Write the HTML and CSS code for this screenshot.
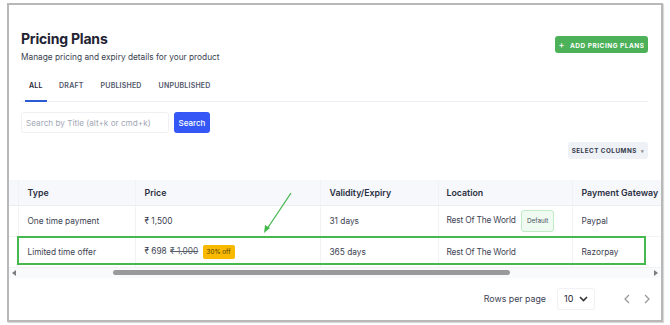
FILE: index.html
```html
<!DOCTYPE html>
<html lang="en">

<head>
    <meta charset="UTF-8">
    <meta name="viewport" content="width=device-width, initial-scale=1.0">
    <title>Pricing Plans</title>
    <link rel="stylesheet" href="styles.css">
</head>

<body>
    <div class="frame">
        <div class="content">
            <div class="page-head">
                <div class="titles">
                    <h1>Pricing Plans</h1>
                    <p class="subtitle">Manage pricing and expiry details for your product</p>
                </div>
                <button class="btn-add"><span class="plus">+</span> ADD PRICING PLANS</button>
            </div>

            <nav class="tabs">
                <a href="#" class="tab active">ALL</a>
                <a href="#" class="tab">DRAFT</a>
                <a href="#" class="tab">PUBLISHED</a>
                <a href="#" class="tab">UNPUBLISHED</a>
            </nav>

            <div class="search-row">
                <input type="text" class="search-input" placeholder="Search by Title (alt+k or cmd+k)">
                <button class="btn-search">Search</button>
            </div>

            <div class="columns-row">
                <button class="btn-columns">SELECT COLUMNS <span class="caret">&#9662;</span></button>
            </div>
        </div>

        <div class="table-wrap">
            <table class="plans">
                <thead>
                    <tr>
                        <th class="stub"></th>
                        <th class="c-type">Type</th>
                        <th class="c-price">Price</th>
                        <th class="c-valid">Validity/Expiry</th>
                        <th class="c-loc">Location</th>
                        <th class="c-pay">Payment Gateway</th>
                    </tr>
                </thead>
                <tbody>
                    <tr>
                        <td class="stub"></td>
                        <td>One time payment</td>
                        <td>&#8377; 1,500</td>
                        <td>31 days</td>
                        <td><span class="loc">Rest Of The World</span> <span class="badge-default">Default</span></td>
                        <td>Paypal</td>
                    </tr>
                    <tr>
                        <td class="stub"></td>
                        <td>Limited time offer</td>
                        <td>&#8377; 698 <s class="old-price">&#8377; 1,000</s> <span class="badge-off">30% off</span></td>
                        <td>365 days</td>
                        <td><span class="loc">Rest Of The World</span></td>
                        <td>Razorpay</td>
                    </tr>
                </tbody>
            </table>
        </div>

        <div class="scrollbar">
            <span class="arrow-left"></span>
            <div class="track"><div class="thumb"></div></div>
            <span class="arrow-right"></span>
        </div>

        <div class="pagination">
            <span class="rows-label">Rows per page</span>
            <div class="rows-select">
                <span>10</span>
                <svg width="9" height="6" viewBox="0 0 9 6"><path d="M1 1l3.5 3.5L8 1" fill="none" stroke="#333" stroke-width="1.6"/></svg>
            </div>
            <div class="pager">
                <svg width="6" height="10" viewBox="0 0 6 10"><path d="M5 1L1 5l4 4" fill="none" stroke="#999" stroke-width="1.3"/></svg>
                <svg width="6" height="10" viewBox="0 0 6 10"><path d="M1 1l4 4-4 4" fill="none" stroke="#999" stroke-width="1.3"/></svg>
            </div>
        </div>
    </div>

    <!-- annotation drawn over the screenshot -->
    <svg class="annotation" width="670" height="325" viewBox="0 0 670 325">
        <rect x="18" y="237" width="627" height="27" fill="none" stroke="#45b84e" stroke-width="2"/>
        <line x1="291" y1="193" x2="267" y2="229" stroke="#45b84e" stroke-width="1.3"/>
        <path d="M264 233l1-8 5 3z" fill="#45b84e"/>
    </svg>
</body>

</html>
```

FILE: styles.css
```css
:root {
    --text-color: #1f2333;
    --muted-color: #50566a;
    --border-color: #eceef3;
    --blue: #3457f5;
    --green: #4cb158;
    --header-bg: #f6f8fb;
}

* {
    margin: 0;
    padding: 0;
    box-sizing: border-box;
}

body {
    font-family: 'Inter', 'Open Sans', sans-serif;
    color: var(--text-color);
    background-color: #fff;
    width: 670px;
    height: 325px;
    overflow: hidden;
}

.frame {
    margin: 3px 0 0 7px;
    width: 656px;
    height: 319px;
    border: 2px solid #b8b8b8;
    box-shadow: 1px 1px 1px rgba(0, 0, 0, 0.15);
    overflow: hidden;
    background-color: #fff;
}

.content {
    padding: 0 13px 0 12px;
}

.page-head {
    display: flex;
    justify-content: space-between;
    align-items: center;
    padding-top: 24px;
}

h1 {
    font-size: 14px;
    font-weight: 700;
    line-height: 20px;
    letter-spacing: -0.2px;
}

.subtitle {
    font-size: 8.3px;
    color: #3a3f4f;
    margin-top: 3px;
}

.btn-add {
    background-color: var(--green);
    color: #fff;
    border: none;
    border-radius: 3px;
    font-family: inherit;
    font-size: 6.5px;
    font-weight: 700;
    letter-spacing: 0.5px;
    width: 93px;
    height: 17px;
    margin-top: -3px;
}

.btn-add .plus {
    font-size: 9px;
    font-weight: 500;
    margin-right: 3px;
}

.tabs {
    display: flex;
    margin-top: 19px;
    border-bottom: 1px solid var(--border-color);
}

.tab {
    font-size: 7px;
    font-weight: 600;
    color: #50566a;
    text-decoration: none;
    padding: 0 8.5px 10px 8.5px;
    letter-spacing: 0.2px;
    border-bottom: 2px solid transparent;
    margin-bottom: -1px;
}

.tab.active {
    color: var(--text-color);
    border-bottom-color: #2a5bd7;
    padding: 0 4px 10px 4px;
    margin: 0 4px -1px 4px;
}

.search-row {
    display: flex;
    gap: 5px;
    margin-top: 10px;
}

.search-input {
    width: 148px;
    height: 21px;
    border: 1px solid #eef0f3;
    border-radius: 3px;
    padding: 0 4px;
    font-family: inherit;
    font-size: 8.2px;
    color: var(--text-color);
}

.search-input::placeholder {
    color: #a3a8b5;
}

.btn-search {
    background-color: var(--blue);
    color: #fff;
    border: none;
    border-radius: 3px;
    font-family: inherit;
    font-size: 8px;
    font-weight: 500;
    width: 36px;
    height: 21px;
}

.columns-row {
    display: flex;
    justify-content: flex-end;
    margin-top: 9px;
}

.btn-columns {
    background-color: #eef1f6;
    color: #333849;
    border: none;
    border-radius: 3px;
    font-family: inherit;
    font-size: 6.3px;
    font-weight: 700;
    letter-spacing: 0.5px;
    width: 80px;
    height: 17px;
}

.btn-columns .caret {
    font-size: 5px;
    color: #888;
    margin-left: 2px;
}

.table-wrap {
    margin-top: 21px;
    overflow: hidden;
    width: 652px;
}

.plans {
    border-collapse: collapse;
    table-layout: fixed;
    width: 730px;
}

.plans th,
.plans td {
    text-align: left;
    padding: 0 9px;
    white-space: nowrap;
    border-right: 1px solid #f0f2f5;
}

.plans th {
    background-color: var(--header-bg);
    font-size: 8.8px;
    font-weight: 600;
    color: #2b3042;
    height: 25px;
    border-bottom: 1px solid var(--border-color);
}

.plans td {
    font-size: 8.3px;
    color: #3d4252;
    height: 31px;
    border-bottom: 1px solid #f0f2f5;
}

.plans .stub {
    width: 9px;
    padding: 0;
}

.c-type { width: 117px; }
.c-price { width: 185px; }
.c-valid { width: 118px; }
.c-loc { width: 134px; }
.c-pay { width: 167px; }

.plans .c-loc,
.plans tbody td:nth-child(5) {
    padding-left: 8px;
}

.loc {
    letter-spacing: -0.15px;
}

.badge-default {
    display: inline-block;
    margin-left: 3px;
    padding: 6px 5px;
    font-size: 6.3px;
    color: #4a5060;
    background-color: #effbf1;
    border: 1px solid #bfecc7;
    border-radius: 3px;
}

.old-price {
    margin-left: 1px;
    color: #5a5f6e;
}

.badge-off {
    display: inline-block;
    margin-left: 2px;
    padding: 3px 4px;
    font-size: 6.3px;
    color: #4a3a00;
    background-color: #f9b900;
    border-radius: 2px;
}

.scrollbar {
    display: flex;
    align-items: center;
    height: 10px;
    background-color: #f9fafc;
    padding: 0 3px;
}

.arrow-left,
.arrow-right {
    width: 0;
    height: 0;
    border-top: 3px solid transparent;
    border-bottom: 3px solid transparent;
}

.arrow-left {
    border-right: 4px solid #7d7d7d;
}

.arrow-right {
    border-left: 4px solid #7d7d7d;
}

.track {
    flex-grow: 1;
    height: 10px;
    display: flex;
    align-items: center;
}

.thumb {
    margin-left: 97px;
    width: 397px;
    height: 5px;
    border-radius: 3px;
    background-color: #9a9a9a;
}

.pagination {
    display: flex;
    align-items: center;
    justify-content: flex-end;
    padding: 10px 11px 0 0;
}

.rows-label {
    font-size: 8.8px;
    color: #3d4252;
    margin-right: 11px;
}

.rows-select {
    display: flex;
    align-items: center;
    justify-content: space-between;
    width: 38px;
    height: 22px;
    padding: 0 6px 0 6px;
    border: 1px solid #f0f1f4;
    border-radius: 3px;
    font-size: 9px;
}

.pager {
    display: flex;
    gap: 14px;
    margin-left: 29px;
}

.annotation {
    position: absolute;
    top: 0;
    left: 0;
    pointer-events: none;
}
```
